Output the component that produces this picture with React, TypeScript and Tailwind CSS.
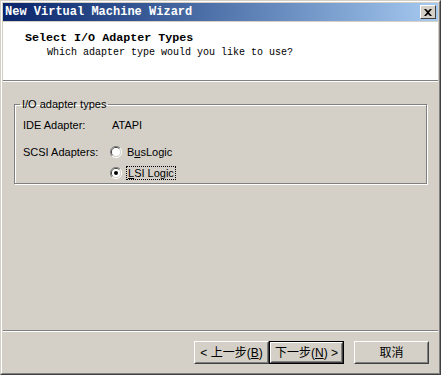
import React from 'react';

const mono = { fontFamily: '"Liberation Mono", "DejaVu Sans Mono", monospace' };
const sans = { fontFamily: '"Liberation Sans", Arial, sans-serif' };
const cjk = { fontFamily: '"Liberation Sans", "Noto Sans CJK SC", sans-serif' };

const Radio: React.FC<{ checked?: boolean }> = ({ checked }) => (
  <svg width="12" height="12" viewBox="0 0 12 12" className="shrink-0">
    <path d="M10 2 A5.5 5.5 0 0 0 2 10" stroke="#808080" strokeWidth="1" fill="none" />
    <path d="M9.2 2.8 A4.5 4.5 0 0 0 2.8 9.2" stroke="#404040" strokeWidth="1" fill="none" />
    <path d="M2 10 A5.5 5.5 0 0 0 10 2" stroke="#ffffff" strokeWidth="1" fill="none" />
    <path d="M2.8 9.2 A4.5 4.5 0 0 0 9.2 2.8" stroke="#d4d0c8" strokeWidth="1" fill="none" />
    <circle cx="6" cy="6" r="4" fill="#ffffff" />
    {checked && <circle cx="6" cy="6" r="2" fill="#000000" />}
  </svg>
);

const Button: React.FC<{ children: React.ReactNode; primary?: boolean }> = ({ children, primary }) => (
  <div className={primary ? 'border border-black' : ''}>
    <div className={`flex items-center justify-center ${primary ? 'w-[73px] h-[21px]' : 'w-[75px] h-[23px]'} border border-t-white border-l-white border-r-[#404040] border-b-[#404040] bg-[#d4d0c8]`}>
      <div className="w-full h-full flex items-center justify-center border border-t-[#d4d0c8] border-l-[#d4d0c8] border-r-[#808080] border-b-[#808080] text-[12px] text-black" style={cjk}>
        {children}
      </div>
    </div>
  </div>
);

export default function App() {
  return (
    <div className="w-[441px] h-[375px] border border-t-[#d4d0c8] border-l-[#d4d0c8] border-r-[#404040] border-b-[#404040] bg-[#d4d0c8]">
      <div className="w-full h-full border border-t-white border-l-white border-r-[#808080] border-b-[#808080] p-px flex flex-col">
        {/* title bar */}
        <div className="h-[18px] flex items-center justify-between bg-gradient-to-r from-[#0a246a] to-[#a6caf0] pl-[2px] pr-[2px]">
          <span className="text-white font-bold text-[12px] leading-none" style={mono}>New Virtual Machine Wizard</span>
          <div className="w-[16px] h-[14px] bg-[#d4d0c8] border border-t-white border-l-white border-r-[#404040] border-b-[#404040] flex items-center justify-center">
            <svg width="8" height="7" viewBox="0 0 8 7">
              <path d="M0 0h2l2 2 2-2h2L5 3.5 8 7H6L4 5 2 7H0l3-3.5z" fill="#000" />
            </svg>
          </div>
        </div>
        <div className="h-px" />
        {/* header */}
        <div className="h-[58px] bg-white pl-[22px] pt-[9px]">
          <div className="font-bold text-[11.7px] leading-[14px] text-black" style={mono}>Select I/O Adapter Types</div>
          <div className="mt-[2px] pl-[22px] text-[10px] leading-[12px] text-black" style={mono}>Which adapter type would you like to use?</div>
        </div>
        <div className="h-px bg-[#808080]" />
        <div className="h-px bg-white" />
        {/* body */}
        <div className="flex-1 px-[11px] pt-[16px]">
          <fieldset className="h-[86px] border border-[#808080] shadow-[inset_1px_1px_0_#ffffff,1px_1px_0_#ffffff] pl-[8px] pr-[8px]" style={sans}>
            <legend className="ml-[-3px] px-[2px] text-[11px] leading-[12px] text-black">I/O adapter types</legend>
            <div className="grid grid-cols-[87px_1fr] items-center text-[11px] text-black mt-[8px]">
              <div className="leading-[14px]">IDE Adapter:</div>
              <div className="leading-[14px] pl-[2px]">ATAPI</div>
              <div className="leading-[14px] mt-[13px]">SCSI Adapters:</div>
              <div className="flex items-center gap-[4px] mt-[13px]">
                <Radio />
                <span className="leading-[14px] px-[1px]">B<span className="underline">u</span>sLogic</span>
              </div>
              <div />
              <div className="flex items-center gap-[4px] mt-[7px]">
                <Radio checked />
                <span className="leading-[12px] px-[1px] border border-dotted border-black"><span className="underline">L</span>SI Logic</span>
              </div>
            </div>
          </fieldset>
        </div>
        <div className="h-px bg-[#808080]" />
        <div className="h-px bg-white" />
        {/* buttons */}
        <div className="h-[40px] flex justify-end items-start pt-[9px] pr-[9px]">
          <Button>&lt; 上一步(<span className="underline">B</span>)</Button>
          <Button primary>下一步(<span className="underline">N</span>) &gt;</Button>
          <div className="w-[10px]" />
          <Button>取消</Button>
        </div>
      </div>
    </div>
  );
}
